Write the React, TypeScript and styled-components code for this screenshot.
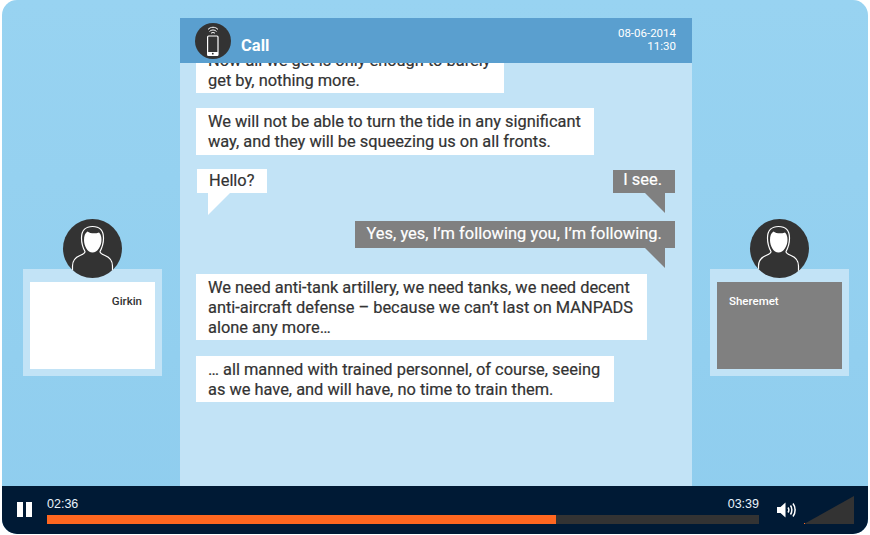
import React from "react";
import styled, { createGlobalStyle } from "styled-components";

const Global = createGlobalStyle`
  html, body { margin: 0; padding: 0; background: #fff; }
  body { font-family: Roboto, "Liberation Sans", sans-serif; overflow: hidden; }
`;

const Frame = styled.div`
  width: 866px;
  height: 534px;
  margin-left: 2px;
  border-radius: 15px;
  overflow: hidden;
  display: flex;
  flex-direction: column;
  background: linear-gradient(180deg, #98d3f1 0%, #8fcdee 100%);
`;

const Stage = styled.div`
  flex: 1;
  min-height: 0;
  display: grid;
  grid-template-columns: 178px 512px 176px;
`;

const Side = styled.div<{ $left?: number; $right?: number }>`
  display: flex;
  flex-direction: column;
  align-items: center;
  padding: 219px ${(p) => p.$right ?? 0}px 0 ${(p) => p.$left ?? 0}px;
`;

const AvatarDisc = styled.div`
  width: 59px;
  height: 59px;
  border-radius: 50%;
  background: #333;
  margin-bottom: -9px;
  position: relative;
  z-index: 1;
  overflow: hidden;
  svg { display: block; }
`;

const NameFrame = styled.div`
  width: 139px;
  height: 107px;
  box-sizing: border-box;
  padding: 13px 7px 7px;
  background: #c2e3f6;
`;

const NameCard = styled.div<{ $dark?: boolean }>`
  height: 100%;
  box-sizing: border-box;
  padding: 13px 13px 13px 12px;
  background: ${(p) => (p.$dark ? "#808080" : "#fff")};
  color: ${(p) => (p.$dark ? "#fff" : "#333")};
  text-align: ${(p) => (p.$dark ? "left" : "right")};
  font-size: 11.5px;
  line-height: 13px;
  font-weight: 500;
`;

const Panel = styled.div`
  margin-top: 18px;
  display: flex;
  flex-direction: column;
  min-height: 0;
  background: #c2e3f6;
`;

const Header = styled.div`
  height: 45px;
  flex: none;
  box-sizing: border-box;
  padding: 5px 16px 0 15px;
  display: flex;
  justify-content: space-between;
  background: #5a9fcf;
  color: #fff;
`;

const HeaderLeft = styled.div`
  display: flex;
  align-items: flex-end;
  gap: 10px;
  height: 36px;
`;

const CallDisc = styled.div`
  width: 36px;
  height: 36px;
  border-radius: 50%;
  background: #333;
  svg { display: block; }
`;

const CallTitle = styled.div`
  font-size: 16.5px;
  line-height: 20px;
  font-weight: 700;
  margin-bottom: 3px;
`;

const Stamp = styled.div`
  font-size: 11.5px;
  line-height: 13px;
  text-align: right;
  padding-top: 4px;
`;

const Thread = styled.div`
  flex: 1;
  min-height: 0;
  overflow: hidden;
  display: flex;
  flex-direction: column;
  justify-content: flex-end;
  padding: 0 16px 84px;
`;

const Bubble = styled.div<{ $mt?: number; $pb?: number }>`
  align-self: flex-start;
  flex: none;
  box-sizing: border-box;
  padding: 4px 13.6px ${(p) => p.$pb ?? 2}px 12px;
  margin-top: ${(p) => p.$mt ?? 0}px;
  background: #fff;
  color: #333;
  font-size: 16.4px;
  line-height: 20px;
  white-space: nowrap;
  -webkit-text-stroke: 0.2px #333;
`;

const TailRow = styled.div`
  display: flex;
  justify-content: space-between;
  align-items: flex-start;
  margin-top: 14px;
  margin-right: 1px;
  margin-left: 1px;
  height: 52px;
  flex: none;
`;

const Tailed = styled.div<{ $gray?: boolean }>`
  position: relative;
  flex: none;
  box-sizing: border-box;
  margin-top: ${(p) => (p.$gray ? 1 : 0)}px;
  padding: ${(p) => (p.$gray ? "0 13px 3px 10px" : "2px 13px 2px 12px")};
  height: ${(p) => (p.$gray ? 23 : 24)}px;
  background: ${(p) => (p.$gray ? "#808080" : "#fff")};
  color: ${(p) => (p.$gray ? "#fff" : "#333")};
  font-size: 16.4px;
  line-height: 20px;
  white-space: nowrap;
  -webkit-text-stroke: 0.2px ${(p) => (p.$gray ? "#fff" : "#333")};
  &::after {
    content: "";
    position: absolute;
    top: 100%;
    width: 0;
    height: 0;
    ${(p) =>
      p.$gray
        ? `right: 10px; border-top: 20px solid #808080; border-left: 20px solid transparent;`
        : `left: 11px; border-top: 22px solid #fff; border-right: 22px solid transparent;`}
  }
`;

const WideTailed = styled(Tailed)`
  align-self: flex-end;
  margin-right: 1px;
  margin-top: 0;
  height: 27px;
  padding: 3px 13px 4px 11px;
  letter-spacing: 0.05px;
`;

const Controls = styled.div`
  height: 48px;
  flex: none;
  box-sizing: border-box;
  padding: 0 14px 0 15px;
  display: flex;
  align-items: flex-start;
  background: #001a35;
  color: #fff;
`;

const Pause = styled.div`
  width: 15px;
  height: 15px;
  margin-top: 16px;
  margin-right: 15px;
  flex: none;
  display: flex;
  justify-content: space-between;
  &::before, &::after {
    content: "";
    width: 6px;
    height: 100%;
    background: #fff;
  }
`;

const Timeline = styled.div`
  width: 712px;
  flex: none;
  padding-top: 11px;
`;

const Times = styled.div`
  display: flex;
  justify-content: space-between;
  font-family: "Liberation Sans", Arial, sans-serif;
  font-size: 12.5px;
  line-height: 14px;
  color: #e8f2fb;
`;

const Track = styled.div`
  height: 9px;
  margin-top: 4px;
  background: #333;
`;

const Fill = styled.div`
  height: 100%;
  background: #ff6720;
`;

const Speaker = styled.div`
  margin: 16px 0 0 18px;
  flex: none;
  svg { display: block; }
`;

const VolumeWedge = styled.div`
  margin: 10px 0 0 7px;
  flex: none;
  svg { display: block; }
`;

const Person = ({ shift = 0 }: { shift?: number }) => (
  <svg width="59" height="59" viewBox="0 0 59 59">
    <g transform={`translate(${shift} 0)`}>
      <path
        d="M9.500 59 V47 C9.500 41 12 38.500 17 36.500 C20 35.300 22 34.500 22 32.500 C19.500 28 18.500 25 18.500 19 C18.500 11 23 7.500 29.500 7.500 C36 7.500 40.500 11 40.500 19 C40.500 25 39.500 28 37 32.500 C37 34.500 39 35.300 42 36.500 C47 38.500 49.500 41 49.500 47 V59"
        fill="none"
        stroke="#fff"
        strokeWidth="1.200"
      />
      <path
        d="M21 21 C21 17 22 14 24.500 12.500 C27 14.500 32 15 36 13.500 C38 15.500 38.500 18 38.500 21 C38.500 27 34.500 33.500 29.500 33.500 C24.500 33.500 21 27 21 21 Z"
        fill="#fff"
      />
    </g>
  </svg>
);

const PhoneIcon = () => (
  <svg width="36" height="36" viewBox="0 0 36 36">
    <rect x="12.600" y="13" width="10.400" height="19.500" rx="1" fill="none" stroke="#fff" strokeWidth="1.200" />
    <rect x="12.600" y="29" width="10.400" height="3.500" fill="#fff" />
    <circle cx="17.800" cy="30.700" r="0.900" fill="#333" />
    <g fill="none" stroke="#fff" strokeWidth="1">
      <path d="M13 6.500 C15.500 3.500 20.500 3.500 23 6.500" />
      <path d="M14.500 8.500 C16.500 6.500 19.500 6.500 21.500 8.500" />
      <path d="M16 10.300 C17 9.300 19 9.300 20 10.300" />
    </g>
  </svg>
);

const SpeakerIcon = () => (
  <svg width="20" height="16" viewBox="0 0 20 16">
    <path d="M0 5 H3.500 L8.500 0.500 V15.500 L3.500 11 H0 Z" fill="#fff" />
    <g fill="none" stroke="#fff" strokeWidth="1.500">
      <path d="M11 5.500 C12 7 12 9 11 10.500" />
      <path d="M13.500 3.500 C15.300 6 15.300 10 13.500 12.500" />
      <path d="M16 1.500 C18.800 5 18.800 11 16 14.500" />
    </g>
  </svg>
);

const WedgeIcon = () => (
  <svg width="50" height="28" viewBox="0 0 50 28">
    <polygon points="0,28 50,0 50,28" fill="#333" />
    <rect x="0" y="27" width="1" height="1" fill="#ff6720" />
  </svg>
);

export default function App() {
  return (
    <>
      <Global />
      <Frame>
        <Stage>
          <Side $left={3}>
            <AvatarDisc><Person /></AvatarDisc>
            <NameFrame>
              <NameCard>Girkin</NameCard>
            </NameFrame>
          </Side>
          <Panel>
            <Header>
              <HeaderLeft>
                <CallDisc><PhoneIcon /></CallDisc>
                <CallTitle>Call</CallTitle>
              </HeaderLeft>
              <Stamp>
                08-06-2014
                <br />
                11:30
              </Stamp>
            </Header>
            <Thread>
              <Bubble>
                Now all we get is only enough to barely
                <br />
                get by, nothing more.
              </Bubble>
              <Bubble $mt={15} $pb={3}>
                We will not be able to turn the tide in any significant
                <br />
                way, and they will be squeezing us on all fronts.
              </Bubble>
              <TailRow>
                <Tailed>Hello?</Tailed>
                <Tailed $gray>I see.</Tailed>
              </TailRow>
              <WideTailed $gray>Yes, yes, I’m following you, I’m following.</WideTailed>
              <Bubble $mt={26}>
                We need anti-tank artillery, we need tanks, we need decent
                <br />
                anti-aircraft defense – because we can’t last on MANPADS
                <br />
                alone any more…
              </Bubble>
              <Bubble $mt={16}>
                … all manned with trained personnel, of course, seeing
                <br />
                as we have, and will have, no time to train them.
              </Bubble>
            </Thread>
          </Panel>
          <Side $right={1}>
            <AvatarDisc><Person shift={-1} /></AvatarDisc>
            <NameFrame>
              <NameCard $dark>Sheremet</NameCard>
            </NameFrame>
          </Side>
        </Stage>
        <Controls>
          <Pause />
          <Timeline>
            <Times>
              <span>02:36</span>
              <span>03:39</span>
            </Times>
            <Track>
              <Fill style={{ width: `${(509 / 712) * 100}%` }} />
            </Track>
          </Timeline>
          <Speaker><SpeakerIcon /></Speaker>
          <VolumeWedge><WedgeIcon /></VolumeWedge>
        </Controls>
      </Frame>
    </>
  );
}
